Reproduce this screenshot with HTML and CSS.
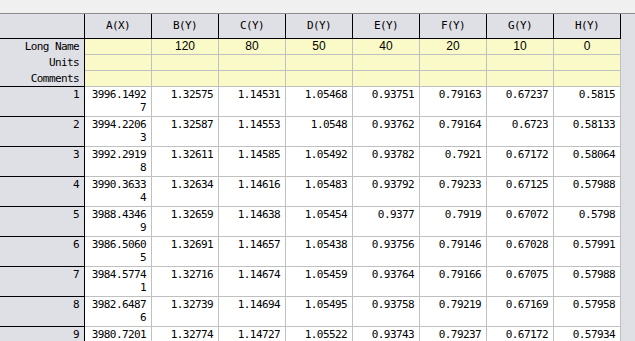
FILE: index.html
```html
<!DOCTYPE html>
<html lang="en">
<head>
  <meta charset="UTF-8" />
  <title>Book1 - Sheet1</title>
  <meta name="viewport" content="width=device-width, initial-scale=1.0" />
  <link rel="stylesheet" href="styles.css">
</head>
<body>
  <div class="topbar"></div>

  <div class="sheet">
    <div class="grid">
      <!-- column headers -->
      <div class="hd corner"></div>
      <div class="hd">A(X)</div>
      <div class="hd">B(Y)</div>
      <div class="hd">C(Y)</div>
      <div class="hd">D(Y)</div>
      <div class="hd">E(Y)</div>
      <div class="hd">F(Y)</div>
      <div class="hd">G(Y)</div>
      <div class="hd">H(Y)</div>

      <!-- label rows -->
      <div class="lbl">Long Name</div>
      <div class="meta"></div>
      <div class="meta">120</div>
      <div class="meta">80</div>
      <div class="meta">50</div>
      <div class="meta">40</div>
      <div class="meta">20</div>
      <div class="meta">10</div>
      <div class="meta">0</div>

      <div class="lbl">Units</div>
      <div class="meta"></div><div class="meta"></div><div class="meta"></div><div class="meta"></div>
      <div class="meta"></div><div class="meta"></div><div class="meta"></div><div class="meta"></div>

      <div class="lbl last">Comments</div>
      <div class="meta"></div><div class="meta"></div><div class="meta"></div><div class="meta"></div>
      <div class="meta"></div><div class="meta"></div><div class="meta"></div><div class="meta"></div>
    </div>

    <div class="grid rows" id="rows"></div>
  </div>

  <script>
    const data = [
      ["3996.14927", "1.32575", "1.14531", "1.05468", "0.93751", "0.79163", "0.67237", "0.5815"],
      ["3994.22063", "1.32587", "1.14553", "1.0548", "0.93762", "0.79164", "0.6723", "0.58133"],
      ["3992.29198", "1.32611", "1.14585", "1.05492", "0.93782", "0.7921", "0.67172", "0.58064"],
      ["3990.36334", "1.32634", "1.14616", "1.05483", "0.93792", "0.79233", "0.67125", "0.57988"],
      ["3988.43469", "1.32659", "1.14638", "1.05454", "0.9377", "0.7919", "0.67072", "0.5798"],
      ["3986.50605", "1.32691", "1.14657", "1.05438", "0.93756", "0.79146", "0.67028", "0.57991"],
      ["3984.57741", "1.32716", "1.14674", "1.05459", "0.93764", "0.79166", "0.67075", "0.57988"],
      ["3982.64876", "1.32739", "1.14694", "1.05495", "0.93758", "0.79219", "0.67169", "0.57958"],
      ["3980.72012", "1.32774", "1.14727", "1.05522", "0.93743", "0.79237", "0.67172", "0.57934"]
    ];

    const rows = document.getElementById("rows");
    data.forEach((row, i) => {
      const num = document.createElement("div");
      num.className = "num";
      num.textContent = i + 1;
      rows.appendChild(num);
      row.forEach(v => {
        const cell = document.createElement("div");
        cell.className = "cell";
        cell.textContent = v;
        rows.appendChild(cell);
      });
    });
  </script>
</body>
</html>
```

FILE: styles.css
```css
body {
  margin: 0;
  background-color: #f0f0f0;
  font-family: "DejaVu Sans Mono", monospace;
  font-size: 11px;
  color: #000;
  overflow: hidden;
}

.topbar {
  height: 13px;
  border-bottom: 1px solid #8c8c8c;
}

.sheet {
  background-color: #dfdfe6;
  height: 327px;
  overflow: hidden;
}

.grid {
  display: grid;
  grid-template-columns: 85px repeat(8, 67px);
  grid-template-rows: 25px 16px 16px 16px;
}

.grid.rows {
  grid-template-rows: none;
  grid-auto-rows: 30px;
}

.grid > div {
  box-sizing: border-box;
  letter-spacing: -0.6px;
  white-space: normal;
  word-break: break-all;
}

.hd {
  background-color: #dfdfe6;
  border-right: 1px solid #000;
  border-bottom: 1px solid #000;
  text-align: center;
  line-height: 24px;
}

.lbl {
  background-color: #dfdfe6;
  border-right: 1px solid #000;
  text-align: right;
  padding-right: 5px;
  line-height: 16px;
}

.lbl.last {
  border-bottom: 1px solid #000;
}

.meta {
  background-color: #fafac8;
  border-right: 1px solid #c0c0c0;
  border-bottom: 1px solid #c0c0c0;
  text-align: center;
  font-family: "Liberation Sans", Arial, sans-serif;
  font-size: 12px;
  letter-spacing: 0 !important;
  line-height: 15px;
}

.num {
  background-color: #dfdfe6;
  border-right: 1px solid #000;
  border-bottom: 1px solid #000;
  text-align: right;
  padding: 1px 5px 0 0;
  line-height: 13px;
}

.cell {
  background-color: #fff;
  border-right: 1px solid #c0c0c0;
  border-bottom: 1px solid #c0c0c0;
  text-align: right;
  padding: 1px 5px 0 5px;
  line-height: 13px;
}
```
